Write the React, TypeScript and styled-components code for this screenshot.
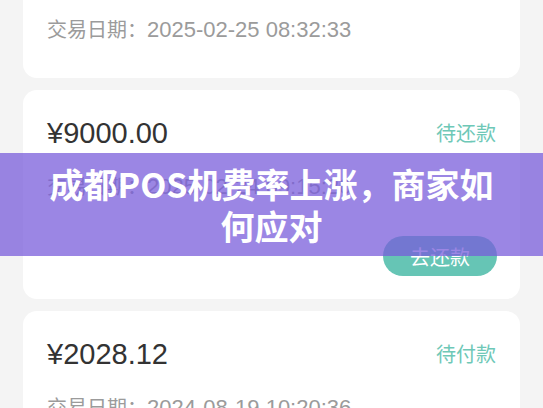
import React from "react";
import styled, { createGlobalStyle } from "styled-components";

const Global = createGlobalStyle`
  html, body { margin: 0; padding: 0; background: #f4f4f4; }
  body {
    width: 543px; height: 408px; overflow: hidden;
    font-family: "Liberation Sans", "Noto Sans CJK SC", sans-serif;
  }
`;

const Page = styled.div`
  position: relative;
  width: 543px;
  height: 408px;
  overflow: hidden;
  background: #f4f4f4;
`;

const List = styled.div`
  display: flex;
  flex-direction: column;
  gap: 12px;
  padding: 0 23px;
  margin-top: -67px;
`;

const Card = styled.div<{ $action?: boolean }>`
  background: #ffffff;
  border-radius: 14px;
  padding: 23px 24px ${(p) => (p.$action ? "23px" : "30px")};
  display: flex;
  flex-direction: column;
`;

const TopRow = styled.div`
  display: flex;
  justify-content: space-between;
  align-items: center;
  height: 40px;
`;

const Amount = styled.span`
  font-size: 29px;
  color: #333333;
  line-height: 40px;
`;

const Status = styled.span`
  font-family: "Noto Sans CJK SC", sans-serif;
  font-size: 20px;
  color: #6ec8b7;
  line-height: 40px;
`;

const DateRow = styled.div`
  margin-top: 14px;
  line-height: 38px;
  height: 38px;
  font-size: 22px;
  color: #9b9b9b;
  white-space: nowrap;
`;

const Label = styled.span`
  font-family: "Noto Sans CJK SC", sans-serif;
  font-size: 20px;
`;

const Actions = styled.div`
  display: flex;
  justify-content: flex-end;
  margin-top: 31px;
  margin-right: -1px;
`;

const PayButton = styled.button`
  width: 114px;
  height: 40px;
  border: none;
  border-radius: 20px;
  background: #66c5b5;
  color: #ffffff;
  font-family: "Noto Sans CJK SC", sans-serif;
  font-size: 20px;
  padding: 0;
`;

const Banner = styled.div`
  position: absolute;
  left: 0;
  right: 0;
  top: 153px;
  height: 103px;
  background: rgba(120, 92, 218, 0.74);
  display: flex;
  align-items: center;
  justify-content: center;
`;

const Title = styled.h1`
  margin: 0;
  max-width: 470px;
  text-align: center;
  color: #ffffff;
  font-family: "Noto Sans CJK SC", sans-serif;
  font-weight: 700;
  font-size: 34px;
  line-height: 42px;
`;

type Order = {
  amount: string;
  status: string;
  date: string;
  action?: string;
};

const orders: Order[] = [
  { amount: "¥5000.00", status: "待还款", date: "2025-02-25 08:32:33" },
  { amount: "¥9000.00", status: "待还款", date: "2025-02-24 09:15:20", action: "去还款" },
  { amount: "¥2028.12", status: "待付款", date: "2024-08-19 10:20:36" },
];

export default function App() {
  return (
    <Page>
      <Global />
      <List>
        {orders.map((o, i) => (
          <Card key={i} $action={!!o.action}>
            <TopRow>
              <Amount>{o.amount}</Amount>
              <Status>{o.status}</Status>
            </TopRow>
            <DateRow>
              <Label>交易日期：</Label>
              {o.date}
            </DateRow>
            {o.action && (
              <Actions>
                <PayButton>{o.action}</PayButton>
              </Actions>
            )}
          </Card>
        ))}
      </List>
      <Banner>
        <Title>成都POS机费率上涨，商家如何应对</Title>
      </Banner>
    </Page>
  );
}
